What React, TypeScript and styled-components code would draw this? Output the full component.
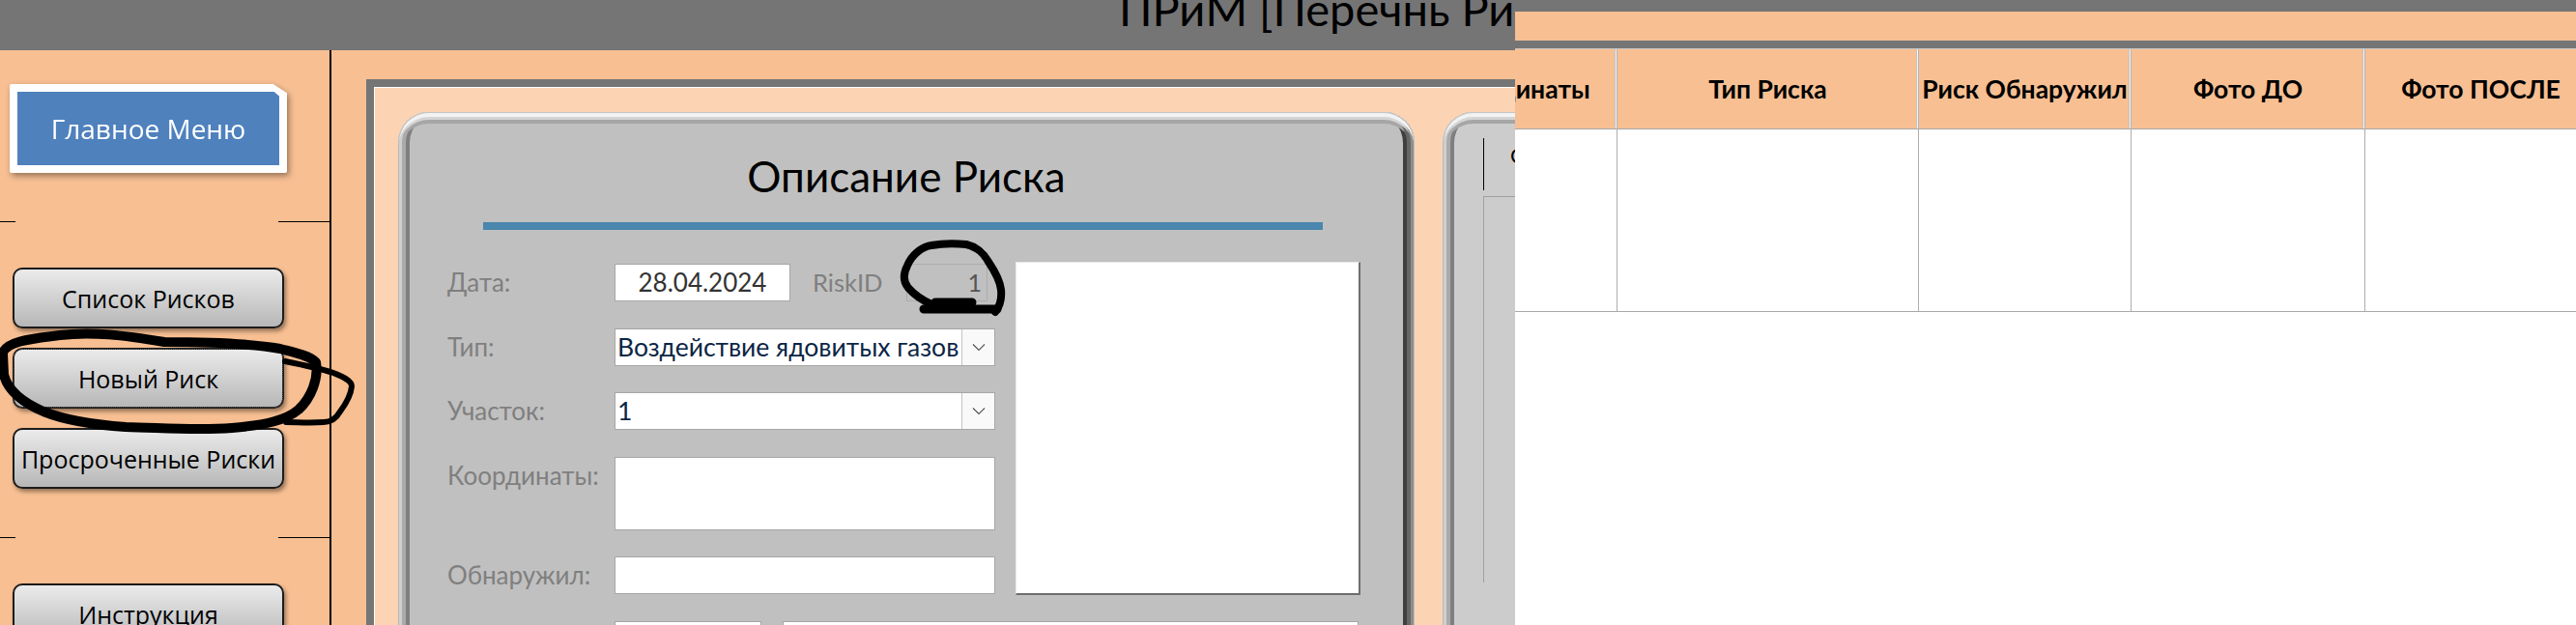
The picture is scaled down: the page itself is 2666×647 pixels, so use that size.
import * as React from 'react';
import styled, { createGlobalStyle, css } from 'styled-components';

const GlobalStyle = createGlobalStyle`
  html, body {
    margin: 0;
    padding: 0;
    background: #fff;
  }
  * {
    box-sizing: border-box;
  }
`;

const bevel = css`
  box-shadow:
    inset 0 1px 0 #c4c4c4,
    inset 1px 0 0 #b8b8b8,
    inset -1px 0 0 #bdbdbd,
    inset 0 5px 0 #f2f2f2,
    inset 4px 0 0 #cfcfcf,
    inset -4px 0 0 #8e8e8e,
    inset 0 8px 0 #d4d4d4,
    inset 8px 0 0 #aaaaaa,
    inset -8px 0 0 #666666,
    inset 0 12px 0 #a6a6a6,
    inset 12px 0 0 #7f7f7f,
    inset -12px 0 0 #3f3f3f;
`;

const columns = [
  { title: 'Координаты', width: 212 },
  { title: 'Тип Риска', width: 312 },
  { title: 'Риск Обнаружил', width: 220 },
  { title: 'Фото ДО', width: 242 },
  { title: 'Фото ПОСЛЕ', width: 240 },
];

const App: React.FC = () => {
  return (
    <Screen>
      <GlobalStyle />
      <LeftWindow>
        <TitleBar>
          <WindowTitle>ПРиМ [Перечнь Рисков]</WindowTitle>
        </TitleBar>
        <Workspace>
          <Sidebar>
            <MenuShadow>
              <MenuFrame>
                <MenuFace>Главное Меню</MenuFace>
              </MenuFrame>
            </MenuShadow>
            <Divider>
              <DividerLeft />
              <DividerRight />
            </Divider>
            <NavGroup>
              <NavButton>Список Рисков</NavButton>
              <NavButton $focused>Новый Риск</NavButton>
              <NavButton>Просроченные Риски</NavButton>
            </NavGroup>
            <Divider>
              <DividerLeft />
              <DividerRight />
            </Divider>
            <NavGroup>
              <NavButton>Инструкция</NavButton>
            </NavGroup>
          </Sidebar>
          <MainArea>
            <Panel>
              <PanelInner>
                <RiskCard>
                  <CardTitle>Описание Риска</CardTitle>
                  <TitleRule />
                  <FormTop>
                    <Fields>
                      <Row>
                        <Label>Дата:</Label>
                        <DateBox>28.04.2024</DateBox>
                        <IdLabel>RiskID</IdLabel>
                        <IdBox>1</IdBox>
                      </Row>
                      <Row>
                        <Label>Тип:</Label>
                        <Combo>
                          <ComboValue>Воздействие ядовитых газов</ComboValue>
                          <ComboArrow>
                            <Chevron />
                          </ComboArrow>
                        </Combo>
                      </Row>
                      <Row>
                        <Label>Участок:</Label>
                        <Combo>
                          <ComboValue>1</ComboValue>
                          <ComboArrow>
                            <Chevron />
                          </ComboArrow>
                        </Combo>
                      </Row>
                      <Row>
                        <Label>Координаты:</Label>
                        <TextBox $height={76} />
                      </Row>
                      <Row>
                        <Label>Обнаружил:</Label>
                        <TextBox />
                      </Row>
                    </Fields>
                    <PhotoBox />
                  </FormTop>
                  <FormBottom>
                    <SmallBox />
                    <WideBox />
                  </FormBottom>
                </RiskCard>
                <SideCard>
                  <TabLabel>Статус</TabLabel>
                  <TabBody />
                </SideCard>
              </PanelInner>
            </Panel>
          </MainArea>
        </Workspace>
      </LeftWindow>
      <RightWindow>
        <TopStrip />
        <PeachStrip />
        <GrayStrip />
        <TableClip>
          <TableGrid>
            {columns.map((c) => (
              <HeaderCell key={c.title} $width={c.width}>
                {c.title}
              </HeaderCell>
            ))}
            {columns.map((c) => (
              <DataCell key={c.title} $width={c.width} />
            ))}
          </TableGrid>
        </TableClip>
      </RightWindow>
      <Scribbles viewBox="0 0 2666 647">
        <path
          d="M3 366 C6 352 40 350 62 347 C95 343 128 347 170 354 C215 354 262 356 290 361 C305 365 320 368 327 375 C330 392 322 412 309 424 C296 435 275 440 240 443 C205 446 170 443 130 442 C100 440 70 436 45 426 C22 416 8 404 4 388 Z"
          fill="none"
          stroke="#000"
          strokeWidth="10"
          strokeLinejoin="round"
        />
        <path
          d="M295 374 C315 378 330 381 345 386 C355 390 364 394 364 400 C363 410 358 418 352 426 C348 433 343 437 335 437 C320 438 308 437 296 437"
          fill="none"
          stroke="#000"
          strokeWidth="6"
          strokeLinejoin="round"
          strokeLinecap="round"
        />
        <path
          d="M964 254 C955 255 944 263 939 275 C934 285 935 292 940 298 C947 306 955 311 964 315 M964 254 C975 252 990 252 1000 253 C1012 256 1018 262 1023 271 C1029 280 1035 290 1036 300 C1037 310 1034 318 1030 323"
          fill="none"
          stroke="#000"
          strokeWidth="8"
          strokeLinecap="round"
        />
        <path
          d="M956 320 L1032 320 M968 313 L1006 313"
          fill="none"
          stroke="#000"
          strokeWidth="9"
          strokeLinecap="round"
        />
      </Scribbles>
    </Screen>
  );
};
export default App;

const Chevron: React.FC = () => (
  <svg width="14" height="9" viewBox="0 0 14 9">
    <path d="M1 1.5 L7 7.5 L13 1.5" fill="none" stroke="#555" strokeWidth="1.2" />
  </svg>
);

const Screen = styled.div`
  position: relative;
  display: flex;
  width: 2666px;
  height: 647px;
  overflow: hidden;
  font-family: 'Lato', 'Open Sans', sans-serif;
`;

const LeftWindow = styled.div`
  display: flex;
  flex-direction: column;
  width: 1568px;
  flex-shrink: 0;
  overflow: hidden;
`;

const TitleBar = styled.div`
  height: 52px;
  flex-shrink: 0;
  background: #757575;
  padding-left: 1158px;
  overflow: hidden;
`;

const WindowTitle = styled.div`
  margin-top: -21px;
  font-size: 47px;
  line-height: 60px;
  color: #000;
  white-space: nowrap;
`;

const Workspace = styled.div`
  display: flex;
  flex: 1;
  min-height: 0;
`;

const Sidebar = styled.div`
  display: flex;
  flex-direction: column;
  width: 343px;
  flex-shrink: 0;
  background: #f7bf92;
  border-right: 2px solid #000;
  padding-top: 35px;
`;

const MenuShadow = styled.div`
  margin-left: 10px;
  width: 287px;
  height: 92px;
  flex-shrink: 0;
  filter: drop-shadow(2px 3px 3px rgba(0, 0, 0, 0.4));
`;

const MenuFrame = styled.div`
  height: 100%;
  padding: 8px;
  background: #fff;
  border-radius: 2px;
  clip-path: polygon(0 0, 95% 0, 100% 10%, 100% 100%, 0 100%);
`;

const MenuFace = styled.div`
  display: flex;
  align-items: center;
  justify-content: center;
  height: 100%;
  background: #4f81bd;
  color: #fff;
  font-family: 'Open Sans', sans-serif;
  font-size: 28px;
  clip-path: polygon(0 0, 98% 0, 100% 6%, 100% 100%, 0 100%);
`;

const Divider = styled.div`
  display: flex;
  justify-content: space-between;
  height: 1px;
  margin: 50px 0 47px;
  flex-shrink: 0;
`;

const DividerLeft = styled.span`
  width: 16px;
  background: #000;
`;

const DividerRight = styled.span`
  width: 53px;
  background: #000;
`;

const NavGroup = styled.div`
  display: flex;
  flex-direction: column;
  gap: 20px;
  margin-left: 13px;
`;

const NavButton = styled.div<{ $focused?: boolean }>`
  display: flex;
  align-items: center;
  justify-content: center;
  width: 281px;
  height: 63px;
  flex-shrink: 0;
  background: linear-gradient(#ebebeb, #b7b7b7);
  border: 2px solid #1c1c1c;
  border-radius: 10px;
  box-shadow: 2px 3px 4px rgba(0, 0, 0, 0.4);
  color: #000;
  font-family: 'Open Sans', sans-serif;
  font-size: 25px;
  white-space: nowrap;
  ${(p) =>
    p.$focused &&
    css`
      outline: 1px dotted #555;
      outline-offset: -2px;
    `}
`;

const MainArea = styled.div`
  flex: 1;
  min-width: 0;
  background: #f7bf92;
  padding: 30px 0 0 36px;
`;

const Panel = styled.div`
  height: 100%;
  border-top: 8px solid #757575;
  border-left: 8px solid #757575;
`;

const PanelInner = styled.div`
  display: flex;
  gap: 29px;
  height: 100%;
  background: #fcd4b3;
  border-top: 1px solid #fff;
  border-left: 1px solid #fff;
  padding: 25px 0 0 24px;
`;

const RiskCard = styled.div`
  width: 1052px;
  height: 700px;
  flex-shrink: 0;
  padding: 12px 12px 0;
  background: #c0c0c0;
  border-radius: 32px;
  ${bevel}
`;

const SideCard = styled.div`
  width: 900px;
  height: 700px;
  flex-shrink: 0;
  padding: 27px 0 0 42px;
  background: #cccccc;
  border-radius: 32px;
  ${bevel}
`;

const TabLabel = styled.div`
  height: 54px;
  padding: 4px 0 0 27px;
  border-left: 1px solid #000;
  font-size: 22px;
  line-height: 27px;
  color: #000;
`;

const TabBody = styled.div`
  height: 400px;
  margin-top: 6px;
  border-top: 1px solid #a0a0a0;
  border-left: 1px solid #a0a0a0;
`;

const CardTitle = styled.div`
  margin-top: 29px;
  height: 50px;
  font-size: 44px;
  line-height: 50px;
  text-align: center;
  color: #000;
`;

const TitleRule = styled.div`
  width: 869px;
  height: 8px;
  margin: 23px 0 33px 76px;
  background: #4a86ae;
`;

const FormTop = styled.div`
  display: flex;
  padding-left: 39px;
`;

const Fields = styled.div`
  display: flex;
  flex-direction: column;
  gap: 27.5px;
  width: 567px;
  padding-top: 2px;
  margin-right: 21px;
`;

const Row = styled.div`
  display: flex;
  align-items: flex-start;
`;

const Label = styled.div`
  width: 173px;
  flex-shrink: 0;
  font-size: 26px;
  line-height: 39px;
  color: #7f7f7f;
  white-space: nowrap;
`;

const fieldBox = css`
  background: #fff;
  border: 1px solid #a6a6a6;
`;

const DateBox = styled.div`
  ${fieldBox}
  width: 182px;
  height: 39px;
  font-size: 26px;
  line-height: 37px;
  text-align: center;
  color: #333;
`;

const IdLabel = styled.div`
  width: 120px;
  padding-left: 23px;
  font-size: 25.5px;
  line-height: 39px;
  color: #7f7f7f;
`;

const IdBox = styled.div`
  width: 84px;
  height: 39px;
  border: 1px solid #adadad;
  padding-right: 5px;
  font-size: 25px;
  line-height: 37px;
  text-align: right;
  color: #555;
`;

const Combo = styled.div`
  ${fieldBox}
  display: flex;
  justify-content: space-between;
  width: 394px;
  height: 39px;
`;

const ComboValue = styled.div`
  padding-left: 2px;
  font-size: 26.5px;
  line-height: 37px;
  color: #0b2545;
  white-space: nowrap;
  overflow: hidden;
`;

const ComboArrow = styled.div`
  display: flex;
  align-items: center;
  justify-content: center;
  width: 34px;
  flex-shrink: 0;
  background: #f9f9f9;
  border-left: 1px solid #c4c4c4;
`;

const TextBox = styled.div<{ $height?: number }>`
  ${fieldBox}
  width: 394px;
  height: ${(p) => p.$height ?? 39}px;
`;

const PhotoBox = styled.div`
  width: 357px;
  height: 345px;
  background: #fff;
  border-top: 1px solid #e8e8e8;
  border-left: 1px solid #e8e8e8;
  border-right: 2px solid #6e6e6e;
  border-bottom: 2px solid #6e6e6e;
`;

const FormBottom = styled.div`
  display: flex;
  gap: 22px;
  margin-top: 27px;
  padding-left: 212px;
`;

const SmallBox = styled.div`
  ${fieldBox}
  width: 152px;
  height: 39px;
`;

const WideBox = styled.div`
  ${fieldBox}
  width: 596px;
  height: 39px;
`;

const RightWindow = styled.div`
  display: flex;
  flex-direction: column;
  flex: 1;
  min-width: 0;
  background: #fff;
`;

const TopStrip = styled.div`
  height: 12px;
  background: #757575;
`;

const PeachStrip = styled.div`
  height: 30px;
  background: #f7bf92;
`;

const GrayStrip = styled.div`
  height: 8px;
  background: #757575;
`;

const TableClip = styled.div`
  overflow: hidden;
  border-top: 1px solid #c8c8c8;
`;

const TableGrid = styled.div`
  display: grid;
  grid-template-columns: repeat(5, max-content);
  grid-template-rows: 83px 189px;
  margin-left: -106px;
`;

const HeaderCell = styled.div<{ $width: number }>`
  display: flex;
  align-items: center;
  justify-content: center;
  width: ${(p) => p.$width}px;
  background: #f7bf92;
  border-right: 1px solid #b4b4b4;
  border-bottom: 1px solid #a8a8a8;
  box-shadow: inset -1px 0 0 #f4f4f4, inset -2px 0 0 #c4c4c4;
  font-size: 26.5px;
  font-weight: 700;
  color: #000;
  white-space: nowrap;
`;

const DataCell = styled.div<{ $width: number }>`
  width: ${(p) => p.$width}px;
  background: #fff;
  border-right: 1px solid #aeaeae;
  border-bottom: 1px solid #a8a8a8;
`;

const Scribbles = styled.svg`
  position: absolute;
  left: 0;
  top: 0;
  width: 2666px;
  height: 647px;
  pointer-events: none;
`;
